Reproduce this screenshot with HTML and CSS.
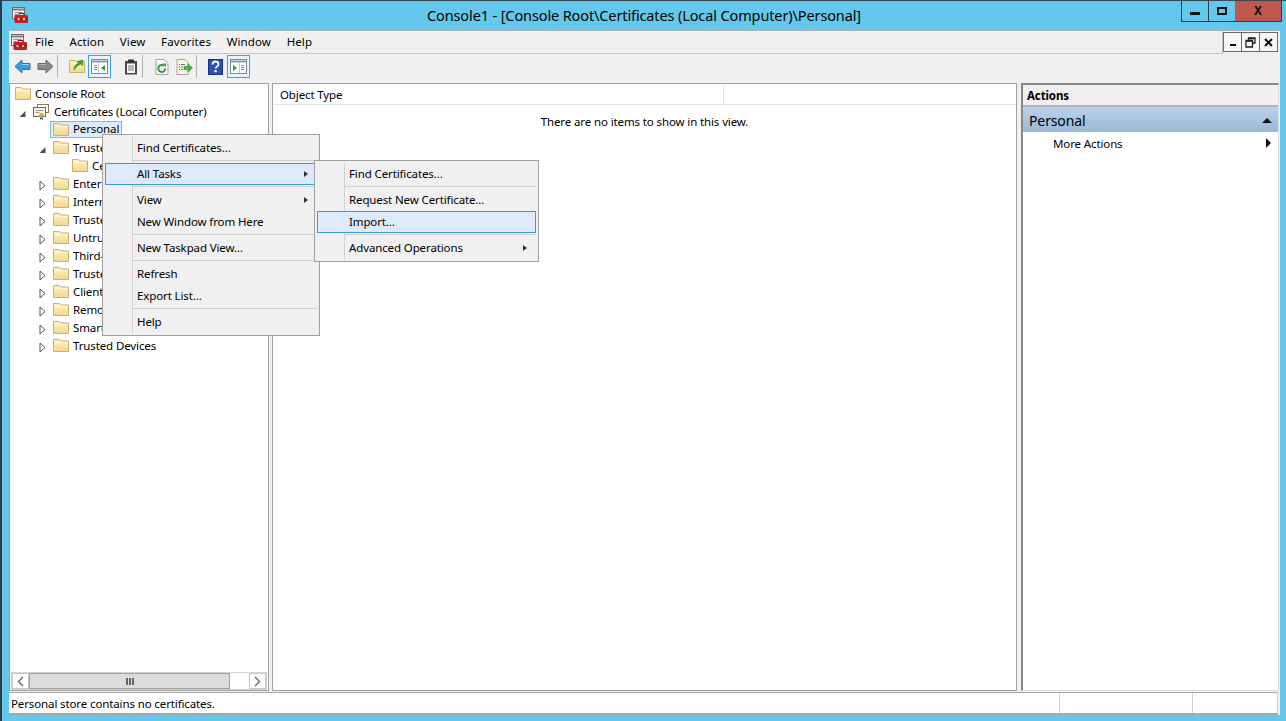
FILE: index.html
```html
<!DOCTYPE html>
<html lang="en">
<head>
    <meta charset="UTF-8">
    <title>Console1 - [Console Root\Certificates (Local Computer)\Personal]</title>
    <link rel="stylesheet" href="styles.css">
</head>
<body>
    <svg class="defs" width="0" height="0">
        <defs>
            <linearGradient id="folderFill" x1="0" y1="0" x2="0" y2="1">
                <stop offset="0" stop-color="#fdf1c2"/>
                <stop offset="1" stop-color="#f4d88e"/>
            </linearGradient>
            <symbol id="folder" viewBox="0 0 16 16">
                <path d="M0.5 1.500h6l1.500 1.500h7.500v10.500h-15z" fill="url(#folderFill)" stroke="#cdb06c"/>
                <path d="M1.500 4.500h13" stroke="#fff8dc"/>
            </symbol>
            <symbol id="toolbox" viewBox="0 0 16 16">
                <rect x="0.500" y="0.500" width="12" height="11" fill="#f4f4f4" stroke="#6f6f6f"/>
                <path d="M1 2.500h11" stroke="#7e7e7e" stroke-width="2"/>
                <path d="M2.500 5.500h8M2.500 7.500h3M2.500 9.500h1" stroke="#8a8a8a"/>
                <path d="M7 8.500V6.500h5v2" fill="none" stroke="#6e1616"/>
                <rect x="2.500" y="8" width="13.500" height="8" rx="1" fill="#c4202a"/>
                <path d="M2.500 12h13.500" stroke="#8a121a"/>
                <path d="M5.500 11h2v2h-2zM11 11h2v2h-2z" fill="#f0c9a0"/>
            </symbol>
            <symbol id="panel-left" viewBox="0 0 17 15">
                <rect x="0.500" y="0.500" width="16" height="14" fill="#fff" stroke="#7d8a94"/>
                <path d="M1 2.500h15" stroke="#8e9aa3" stroke-width="2"/>
                <path d="M3 6.500h3M3 8.500h3M3 10.500h3" stroke="#7d8a94"/>
                <path d="M7.500 4v10" stroke="#c3c9ce"/>
                <path d="M14 6v6l-4-3z" fill="#2f9a3a"/>
            </symbol>
            <symbol id="panel-right" viewBox="0 0 17 15">
                <rect x="0.500" y="0.500" width="16" height="14" fill="#fff" stroke="#7d8a94"/>
                <path d="M1 2.500h15" stroke="#8e9aa3" stroke-width="2"/>
                <path d="M11 6.500h3M11 8.500h3M11 10.500h3" stroke="#7d8a94"/>
                <path d="M9.500 4v10" stroke="#c3c9ce"/>
                <path d="M3 6v6l4-3z" fill="#2f9a3a"/>
            </symbol>
            <symbol id="tri-open" viewBox="0 0 9 9">
                <path d="M7.500 2v6H1.500z" fill="#505050"/>
            </symbol>
            <symbol id="tri-closed" viewBox="0 0 9 11">
                <path d="M2 1l5 4.500L2 10z" fill="#fff" stroke="#555"/>
            </symbol>
        </defs>
    </svg>

    <div class="window">
        <div class="titlebar">
            <svg class="app-icon"><use href="#toolbox"/></svg>
            <div class="title">Console1 - [Console Root\Certificates (Local Computer)\Personal]</div>
            <div class="window-buttons">
                <div class="win-btn min"><span class="glyph-min"></span></div>
                <div class="win-btn max"><span class="glyph-max"></span></div>
                <div class="win-btn close">X</div>
            </div>
        </div>

        <div class="client">
            <div class="menubar-row">
                <div class="menubar">
                    <svg class="menu-icon"><use href="#toolbox"/></svg>
                    <span class="menu-label">File</span>
                    <span class="menu-label">Action</span>
                    <span class="menu-label">View</span>
                    <span class="menu-label">Favorites</span>
                    <span class="menu-label">Window</span>
                    <span class="menu-label">Help</span>
                </div>
                <div class="mdi-buttons">
                    <div class="mdi-btn"><span class="mdi-min"></span></div>
                    <div class="mdi-btn">
                        <svg width="11" height="11" viewBox="0 0 11 11"><path d="M3.500 3V1h6.500v5H8M1 3.500h6.500v6.500H1z" fill="none" stroke="#222" stroke-width="1.300"/><path d="M1 4h6.500M3.500 1.500H10" stroke="#222" stroke-width="1.500"/></svg>
                    </div>
                    <div class="mdi-btn">
                        <svg width="9" height="9" viewBox="0 0 9 9"><path d="M1 1l7 7M8 1L1 8" stroke="#111" stroke-width="2"/></svg>
                    </div>
                </div>
            </div>

            <div class="toolbar">
                <div class="tool-btn">
                    <svg width="17" height="15" viewBox="0 0 17 15"><path d="M8 1L1 7.500 8 14v-3.500h8v-6H8z" fill="#3a9be6" stroke="#1f74c4"/><path d="M8 5.500h7" stroke="#a5d8fb"/></svg>
                </div>
                <div class="tool-btn">
                    <svg width="17" height="15" viewBox="0 0 17 15"><path d="M9 1l7 6.500L9 14v-3.500H1v-6h8z" fill="#8a8a8a" stroke="#666"/><path d="M2 5.500h7" stroke="#b5b5b5"/></svg>
                </div>
                <div class="tool-sep"></div>
                <div class="tool-btn">
                    <svg width="16" height="16" viewBox="0 0 16 16"><use href="#folder"/><path d="M5 11c0-4 2-6 4.500-6.500L8.500 2.500 14 1l-0.500 5.500-2-1.500C9 6 7 8 5 11z" fill="#3fa535" stroke="#2b7d24" stroke-width="0.600"/></svg>
                </div>
                <div class="tool-btn active"><svg class="panel-icon"><use href="#panel-left"/></svg></div>
                <div class="tool-sep-blank"></div>
                <div class="tool-btn">
                    <svg width="14" height="16" viewBox="0 0 14 16"><rect x="1" y="2" width="12" height="13.500" fill="#4a4a4a"/><rect x="3" y="4.500" width="8" height="9.500" fill="#f6f6f6"/><path d="M4 7h6M4 9h6M4 11h6" stroke="#777"/><rect x="4" y="0.500" width="6" height="3" fill="#333"/></svg>
                </div>
                <div class="tool-sep"></div>
                <div class="tool-btn">
                    <svg width="14" height="16" viewBox="0 0 14 16"><path d="M1 0.500h8l4 4v11H1z" fill="#fafafa" stroke="#a3a3a3"/><path d="M10.300 9.500a3.500 3.500 0 1 1-1.200-2.700" fill="none" stroke="#2e9c3b" stroke-width="2"/><path d="M7.500 4.500h3.500V8z" fill="#2e9c3b"/></svg>
                </div>
                <div class="tool-btn">
                    <svg width="17" height="16" viewBox="0 0 17 16"><path d="M1 0.500h8l3 3v12H1z" fill="#fbf6e3" stroke="#a3a3a3"/><path d="M3 5.500h1M5 5.500h4M3 8h1M5 8h2M3 10.500h1M5 10.500h2" stroke="#666"/><path d="M8 7.500h4V5l4.500 4-4.500 4v-2.500H8z" fill="#49b54a" stroke="#2e8c33" stroke-width="0.600"/></svg>
                </div>
                <div class="tool-sep"></div>
                <div class="tool-btn">
                    <svg width="15" height="16" viewBox="0 0 15 16"><rect width="15" height="16" fill="#2f4fb0"/><rect x="0.500" y="0.500" width="14" height="15" fill="none" stroke="#1c2f80"/><path d="M4.500 5.500c0-2 1.300-3 3-3s3 1 3 2.700c0 2-2.800 2.300-2.800 4.300" fill="none" stroke="#fff" stroke-width="1.800"/><rect x="6.500" y="11" width="2.200" height="2.200" fill="#fff"/></svg>
                </div>
                <div class="tool-btn active"><svg class="panel-icon"><use href="#panel-right"/></svg></div>
            </div>

            <div class="panes">
                <div class="tree-pane">
                    <div class="tree">
                        <div class="tree-row root"><svg class="folder-icon"><use href="#folder"/></svg><span class="label">Console Root</span></div>
                        <div class="tree-row lvl1">
                            <span class="twisty"><svg class="tri-open"><use href="#tri-open"/></svg></span>
                            <svg class="cert-icon" viewBox="0 0 16 16"><rect x="4.500" y="0.500" width="11" height="8" fill="#fff" stroke="#8a7a55"/><rect x="0.500" y="3.500" width="12" height="9" fill="#fbf6e3" stroke="#6f6a55"/><path d="M2.500 6.500h8M2.500 8.500h4" stroke="#999"/><circle cx="8.500" cy="11.500" r="2.500" fill="#e2a12a"/><path d="M7 13.500v2.500l1.500-1 1.500 1v-2.500" fill="#2d74c4"/></svg>
                            <span class="label">Certificates (Local Computer)</span>
                        </div>
                        <div class="tree-row selected-row">
                            <span class="selected"><svg class="folder-icon"><use href="#folder"/></svg><span class="label">Personal</span></span>
                        </div>
                        <div class="tree-row lvl2">
                            <span class="twisty"><svg class="tri-open"><use href="#tri-open"/></svg></span>
                            <svg class="folder-icon"><use href="#folder"/></svg><span class="label">Trusted Root Certification Authorities</span>
                        </div>
                        <div class="tree-row lvl3"><svg class="folder-icon"><use href="#folder"/></svg><span class="label">Certificates</span></div>
                        <div class="tree-row lvl2"><span class="twisty"><svg class="tri-closed"><use href="#tri-closed"/></svg></span><svg class="folder-icon"><use href="#folder"/></svg><span class="label">Enterprise Trust</span></div>
                        <div class="tree-row lvl2"><span class="twisty"><svg class="tri-closed"><use href="#tri-closed"/></svg></span><svg class="folder-icon"><use href="#folder"/></svg><span class="label">Intermediate Certification Authorities</span></div>
                        <div class="tree-row lvl2"><span class="twisty"><svg class="tri-closed"><use href="#tri-closed"/></svg></span><svg class="folder-icon"><use href="#folder"/></svg><span class="label">Trusted Publishers</span></div>
                        <div class="tree-row lvl2"><span class="twisty"><svg class="tri-closed"><use href="#tri-closed"/></svg></span><svg class="folder-icon"><use href="#folder"/></svg><span class="label">Untrusted Certificates</span></div>
                        <div class="tree-row lvl2"><span class="twisty"><svg class="tri-closed"><use href="#tri-closed"/></svg></span><svg class="folder-icon"><use href="#folder"/></svg><span class="label">Third-Party Root Certification Authorities</span></div>
                        <div class="tree-row lvl2"><span class="twisty"><svg class="tri-closed"><use href="#tri-closed"/></svg></span><svg class="folder-icon"><use href="#folder"/></svg><span class="label">Trusted People</span></div>
                        <div class="tree-row lvl2"><span class="twisty"><svg class="tri-closed"><use href="#tri-closed"/></svg></span><svg class="folder-icon"><use href="#folder"/></svg><span class="label">Client Authentication Issuers</span></div>
                        <div class="tree-row lvl2"><span class="twisty"><svg class="tri-closed"><use href="#tri-closed"/></svg></span><svg class="folder-icon"><use href="#folder"/></svg><span class="label">Remote Desktop</span></div>
                        <div class="tree-row lvl2"><span class="twisty"><svg class="tri-closed"><use href="#tri-closed"/></svg></span><svg class="folder-icon"><use href="#folder"/></svg><span class="label">Smart Card Trusted Roots</span></div>
                        <div class="tree-row lvl2"><span class="twisty"><svg class="tri-closed"><use href="#tri-closed"/></svg></span><svg class="folder-icon"><use href="#folder"/></svg><span class="label">Trusted Devices</span></div>
                    </div>
                    <div class="hscroll">
                        <div class="scroll-btn"><svg width="7" height="11" viewBox="0 0 7 11"><path d="M6 1L1.500 5.500 6 10" fill="none" stroke="#666" stroke-width="1.400"/></svg></div>
                        <div class="scroll-thumb"><span class="grip"></span><span class="grip"></span><span class="grip"></span></div>
                        <div class="scroll-space"></div>
                        <div class="scroll-btn"><svg width="7" height="11" viewBox="0 0 7 11"><path d="M1 1l4.500 4.500L1 10" fill="none" stroke="#666" stroke-width="1.400"/></svg></div>
                    </div>
                </div>

                <div class="list-pane">
                    <div class="list-header"><div class="list-col">Object Type</div></div>
                    <div class="list-empty">There are no items to show in this view.</div>
                </div>

                <div class="actions-pane">
                    <div class="actions-title">Actions</div>
                    <div class="actions-group"><span>Personal</span><span class="arrow-up"></span></div>
                    <div class="actions-item"><span>More Actions</span><span class="arrow-right-big"></span></div>
                </div>
            </div>

            <div class="statusbar">
                <div class="status-cell main">Personal store contains no certificates.</div>
                <div class="status-cell mid"></div>
                <div class="status-cell end"></div>
            </div>
        </div>

        <div class="context-menu main-menu">
            <div class="item">Find Certificates...</div>
            <div class="sep"></div>
            <div class="item hot">All Tasks<span class="arrow"></span></div>
            <div class="sep"></div>
            <div class="item">View<span class="arrow"></span></div>
            <div class="item">New Window from Here</div>
            <div class="sep"></div>
            <div class="item">New Taskpad View...</div>
            <div class="sep"></div>
            <div class="item">Refresh</div>
            <div class="item">Export List...</div>
            <div class="sep"></div>
            <div class="item">Help</div>
        </div>

        <div class="context-menu sub-menu">
            <div class="item">Find Certificates...</div>
            <div class="sep"></div>
            <div class="item">Request New Certificate...</div>
            <div class="item hot">Import...</div>
            <div class="sep"></div>
            <div class="item">Advanced Operations<span class="arrow"></span></div>
        </div>
    </div>
</body>
</html>
```

FILE: styles.css
```css
* {
    box-sizing: border-box;
}
body {
    margin: 0;
    font-family: "Noto Sans", sans-serif;
    font-size: 11.5px;
    letter-spacing: -0.12px;
    color: #000;
}
.defs {
    position: absolute;
}
.window {
    position: relative;
    width: 1286px;
    height: 721px;
    overflow: hidden;
    background: #64c8ec;
    border-top: 1px solid #3a4650;
    border-left: 2px solid #2f3b45;
}

/* title bar */
.titlebar {
    position: relative;
    height: 29px;
}
.app-icon {
    position: absolute;
    left: 10px;
    top: 6px;
    width: 16px;
    height: 16px;
}
.title {
    text-align: center;
    font-size: 14.5px;
    line-height: 29px;
}
.window-buttons {
    position: absolute;
    top: -1px;
    right: 4px;
    display: flex;
    height: 22px;
    border: 1px solid #2f3b45;
    border-top: none;
}
.win-btn {
    display: flex;
    align-items: center;
    justify-content: center;
}
.win-btn.min {
    width: 27px;
    border-right: 1px solid #2f3b45;
}
.win-btn.max {
    width: 26px;
}
.win-btn.close {
    width: 46px;
    background: #c0584e;
    font-weight: bold;
    font-size: 12px;
    color: #111;
}
.glyph-min {
    width: 10px;
    height: 3px;
    margin-top: 5px;
    background: #111;
}
.glyph-max {
    width: 10px;
    height: 8px;
    border: 2px solid #111;
}

/* client area */
.client {
    width: 1271px;
    height: 685px;
    margin-left: 7px;
    background: #f0f0f0;
    border-top: 1px solid #a8b4bc;
}

/* menu bar */
.menubar-row {
    display: flex;
    height: 23px;
}
.menubar {
    display: flex;
    align-items: center;
    width: 1214px;
    padding-left: 2px;
    background: #f0f0f0;
    border-right: 1px solid #c4c8cc;
    border-bottom: 1px solid #c4c8cc;
}
.menu-icon {
    width: 16px;
    height: 16px;
    margin-right: 8px;
}
.menu-label {
    margin-right: 15.7px;
    margin-bottom: 2px;
    letter-spacing: 0.1px;
}
.mdi-buttons {
    display: flex;
    height: 20px;
    margin-top: 1px;
}
.mdi-btn {
    display: flex;
    align-items: center;
    justify-content: center;
    width: 19px;
    height: 20px;
    background: #f6f6f6;
    border: 1px solid #6a6a6a;
    margin-right: -1px;
}
.mdi-min {
    width: 6px;
    height: 2px;
    margin-top: 6px;
    background: #111;
}

/* toolbar */
.toolbar {
    display: flex;
    align-items: flex-start;
    height: 29px;
    padding: 1px 0 0 2px;
}
.tool-btn {
    display: flex;
    align-items: center;
    justify-content: center;
    width: 23px;
    height: 23px;
}
.tool-btn.active {
    background: #eaf4fc;
    border: 1px solid #3ea0dc;
}
.tool-sep {
    width: 8px;
    height: 23px;
    border-left: 1px solid #b0b0b0;
}
.tool-sep-blank {
    width: 8px;
}
.panel-icon {
    width: 17px;
    height: 15px;
}

/* panes */
.panes {
    display: flex;
    height: 608px;
}
.tree-pane {
    display: flex;
    flex-direction: column;
    width: 260px;
    background: #fff;
    border: 1px solid #a0a0a0;
}
.tree {
    flex: 1;
    overflow: hidden;
    padding-top: 1px;
    white-space: nowrap;
}
.tree-row {
    display: flex;
    align-items: center;
    height: 18px;
}
.label {
    margin-bottom: 2px;
}
.tree-row.root {
    padding-left: 5px;
}
.tree-row.lvl1 {
    padding-left: 3px;
}
.tree-row.lvl2 {
    padding-left: 23px;
}
.tree-row.lvl3 {
    padding-left: 62px;
}
.tree-row.selected-row {
    padding-left: 40px;
}
.selected {
    display: flex;
    align-items: center;
    align-self: flex-start;
    height: 17px;
    padding: 0 2px 0 2px;
    background: #dcebfb;
    border: 1px solid #82b6e8;
}
.twisty {
    flex: none;
    display: flex;
    align-items: center;
    width: 20px;
    padding: 3px 0 0 5px;
}
.tri-open {
    width: 9px;
    height: 9px;
}
.tri-closed {
    width: 9px;
    height: 11px;
}
.folder-icon {
    flex: none;
    width: 16px;
    height: 16px;
    margin-right: 4px;
}
.cert-icon {
    flex: none;
    width: 16px;
    height: 16px;
    margin-right: 5px;
}
.hscroll {
    display: flex;
    height: 18px;
    margin: 0 1px 0 1px;
    background: #fff;
    border: 1px solid #d4d4d4;
}
.scroll-btn {
    display: flex;
    align-items: center;
    justify-content: center;
    width: 17px;
    border: 1px solid #c8c8c8;
}
.scroll-thumb {
    display: flex;
    align-items: center;
    justify-content: center;
    gap: 1px;
    width: 201px;
    background: #dcdcdc;
    border: 1px solid #a0a0a0;
}
.grip {
    width: 2px;
    height: 7px;
    background: #666;
}
.scroll-space {
    flex: 1;
}
.list-pane {
    width: 745px;
    margin-left: 3px;
    background: #fff;
    border: 1px solid #a0a0a0;
}
.list-header {
    display: flex;
    height: 20px;
    margin-top: 1px;
    margin-left: 1px;
    border-bottom: 1px solid #e5e5e5;
}
.list-col {
    width: 450px;
    padding: 2px 0 0 6px;
    border-right: 1px solid #e5e5e5;
}
.list-empty {
    padding-top: 9px;
    text-align: center;
}
.actions-pane {
    width: 258px;
    margin-left: 4px;
    background: #fff;
    border-top: 2px solid #888;
    border-left: 2px solid #888;
    border-right: 1px solid #ddd;
    border-bottom: 1px solid #ddd;
}
.actions-title {
    height: 22px;
    padding: 3px 0 0 4px;
    font-weight: bold;
    background: #f0f0f0;
    border-bottom: 2px solid #b4b4b4;
}
.actions-group {
    display: flex;
    align-items: center;
    justify-content: space-between;
    height: 25px;
    padding: 2px 6px 0 6px;
    font-size: 14px;
    background: linear-gradient(#bad2ec, #9cb6d6);
}
.arrow-up {
    border-left: 5px solid transparent;
    border-right: 5px solid transparent;
    border-bottom: 5px solid #111;
}
.actions-item {
    display: flex;
    align-items: center;
    justify-content: space-between;
    height: 22px;
    padding: 0 7px 0 30px;
}
.arrow-right-big {
    border-top: 5px solid transparent;
    border-bottom: 5px solid transparent;
    border-left: 5px solid #111;
}

/* status bar */
.statusbar {
    display: flex;
    height: 23px;
    margin-top: 1px;
    margin-right: 2px;
    background: #fff;
    border-top: 1px solid #a8a8a8;
    border-bottom: 2px solid #a8a8a8;
}
.status-cell {
    padding: 3px 0 0 2px;
}
.status-cell.main {
    width: 1051px;
    border-right: 1px solid #d4d4d4;
}
.status-cell.mid {
    width: 133px;
    border-right: 1px solid #d4d4d4;
}
.status-cell.end {
    flex: 1;
    border-right: 1px solid #d4d4d4;
}

/* context menus */
.context-menu {
    position: absolute;
    padding: 2px;
    background: #f0f0f0;
    border: 1px solid #a0a0a0;
}
.context-menu::before {
    content: "";
    position: absolute;
    top: 2px;
    bottom: 2px;
    left: 29px;
    width: 1px;
    background: #d0d0d0;
}
.main-menu {
    left: 100px;
    top: 133px;
    width: 218px;
}
.sub-menu {
    left: 312px;
    top: 159px;
    width: 225px;
}
.item {
    position: relative;
    display: flex;
    align-items: center;
    height: 22px;
    padding: 0 0 2px 31px;
    border: 1px solid transparent;
}
.item.hot {
    background: #dceafb;
    border-color: #3a9bd9;
}
.arrow {
    position: absolute;
    right: 8px;
    top: 7px;
    border-top: 3px solid transparent;
    border-bottom: 3px solid transparent;
    border-left: 4px solid #333;
}
.sep {
    height: 4px;
    margin-left: 28px;
    padding-top: 1px;
}
.sep::after {
    content: "";
    display: block;
    height: 1px;
    background: #d0d0d0;
}
```
